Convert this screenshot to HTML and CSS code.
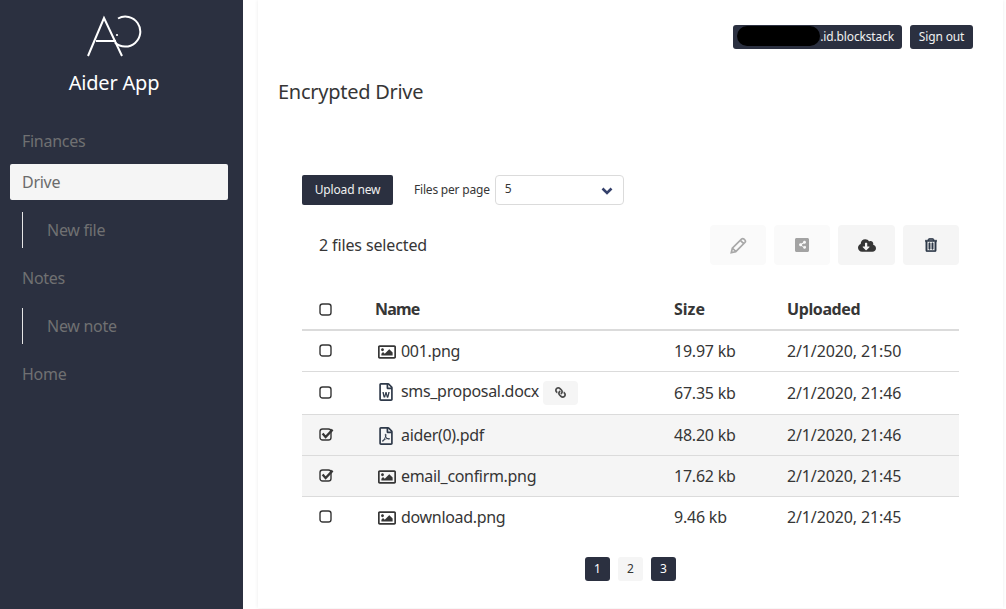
FILE: index.html
```html
<!DOCTYPE html>
<html lang="en">
<head>
<meta charset="utf-8">
<title>Aider App</title>
<link rel="stylesheet" href="styles.css">
</head>
<body>
<svg class="defs" aria-hidden="true">
  <symbol id="i-image" viewBox="0 0 512 512"><path d="M464 64H48C21.49 64 0 85.49 0 112v288c0 26.51 21.49 48 48 48h416c26.51 0 48-21.49 48-48V112c0-26.51-21.49-48-48-48zm-6 336H54a6 6 0 0 1-6-6V118a6 6 0 0 1 6-6h404a6 6 0 0 1 6 6v276a6 6 0 0 1-6 6zM128 152c-22.091 0-40 17.909-40 40s17.909 40 40 40 40-17.909 40-40-17.909-40-40-40zM96 352h320v-80l-87.515-87.515c-4.686-4.686-12.284-4.686-16.971 0L192 304l-39.515-39.515c-4.686-4.686-12.284-4.686-16.971 0L96 304v48z"/></symbol>
  <symbol id="i-word" viewBox="0 0 384 512"><path d="M369.9 97.9L286 14C277 5 264.8-.1 252.1-.1H48C21.5 0 0 21.5 0 48v416c0 26.5 21.5 48 48 48h288c26.5 0 48-21.5 48-48V131.9c0-12.7-5.1-25-14.1-34zM332.1 128H256V51.9l76.1 76.1zM48 464V48h160v104c0 13.3 10.7 24 24 24h104v288H48zm220.1-208c-5.7 0-10.6 4-11.7 9.5-20.6 97.7-20.4 95.4-21 103.5-.2-1.2-.4-2.6-.7-4.3-.8-5.1.3.2-23.6-99.5-1.3-5.4-6.1-9.2-11.7-9.2h-13.3c-5.5 0-10.3 3.8-11.7 9.1-24.4 99-24 96.2-24.8 103.7-.1-1.1-.2-2.5-.5-4.2-.7-5.2-14.1-73.3-19.1-99-1.1-5.6-6-9.7-11.8-9.7h-16.8c-7.8 0-13.5 7.3-11.7 14.8 8 32.6 26.7 109.5 33.2 136 1.3 5.4 6.1 9.1 11.7 9.1h25.2c5.5 0 10.3-3.7 11.6-9.1l17.9-71.4c1.5-6.2 2.5-12 3-17.3l.3 1.8c1.4 8.1-.5.2 19.8 87 1.3 5.4 6.1 9.2 11.7 9.2h24.7c5.5 0 10.3-3.7 11.6-9.1 20.8-81.9 30.2-119 34.5-136 1.9-7.6-3.8-14.9-11.6-14.9h-15.8z"/></symbol>
  <symbol id="i-pdf" viewBox="0 0 384 512"><path d="M369.9 97.9L286 14C277 5 264.8-.1 252.1-.1H48C21.5 0 0 21.5 0 48v416c0 26.5 21.5 48 48 48h288c26.5 0 48-21.5 48-48V131.9c0-12.7-5.1-25-14.1-34zM332.1 128H256V51.9l76.1 76.1zM48 464V48h160v104c0 13.3 10.7 24 24 24h104v288H48zm250.2-143.7c-12.2-12-47-8.7-64.4-6.5-17.2-10.5-28.7-25-36.8-46.3 3.9-16.1 10.1-40.6 5.4-56-4.2-26.2-37.8-23.6-42.6-5.9-4.4 16.1-.4 38.5 7 67.1-10 23.9-24.9 56-35.4 74.4-20 10.3-47 26.2-51 46.2-3.3 15.8 26 55.2 76.1-31.2 22.4-7.4 46.8-16.5 68.4-20.1 18.9 10.2 41 17 55.8 17 25.5 0 28-28.2 17.5-38.7zm-198.1 77.8c5.1-13.7 24.5-29.5 30.4-35-19 30.3-30.4 35.7-30.4 35zm81.6-190.6c7.4 0 6.7 32.1 1.8 40.8-4.4-13.9-4.3-40.8-1.8-40.8zm-24.4 136.6c9.7-16.9 18-37 24.7-54.7 8.3 15.1 18.9 27.2 30.1 35.5-20.8 4.3-38.9 13.1-54.8 19.2zm131.6-5s-5 6-37.3-7.8c35.1-2.6 40.9 5.4 37.3 7.8z"/></symbol>
  <symbol id="i-check" viewBox="0 0 16 15"><rect x="1" y="2" width="11" height="11" rx="2.6" fill="none" stroke="#363636" stroke-width="1.4"/><path d="M3.6 6.6 L6.6 10 L13.6 2.6" fill="none" stroke="#363636" stroke-width="2.3"/></symbol>
  <symbol id="i-square" viewBox="0 0 16 15"><rect x="1" y="2" width="11" height="11" rx="2.6" fill="none" stroke="#363636" stroke-width="1.4"/></symbol>
</svg>
<div class="app">
  <aside class="sidebar">
    <svg class="logo" viewBox="0 0 58 42" fill="none" stroke="#fff" stroke-width="2">
      <path d="M3 41 L19 3 L37 41"/>
      <path d="M11 26 H31"/>
      <path d="M33 3.5 A15 15 0 1 1 30 27.5"/>
      <circle cx="32" cy="20" r="1.1" fill="#fff" stroke="none"/>
    </svg>
    <h1 class="brand">Aider App</h1>
    <nav class="menu">
      <a class="menu-item">Finances</a>
      <a class="menu-item active">Drive</a>
      <div class="submenu"><a class="menu-item">New file</a></div>
      <a class="menu-item">Notes</a>
      <div class="submenu"><a class="menu-item">New note</a></div>
      <a class="menu-item">Home</a>
    </nav>
  </aside>
  <main class="card">
    <div class="topbar">
      <span class="btn btn-user"><span class="redact"></span>.id.blockstack</span>
      <span class="btn btn-signout">Sign out</span>
    </div>
    <h2 class="title">Encrypted Drive</h2>
    <section class="drive">
      <div class="controls">
        <span class="btn btn-upload">Upload new</span>
        <label class="per-page">Files per page</label>
        <div class="select">5
          <svg class="chevron" viewBox="0 0 12 8" fill="none" stroke="#34406b" stroke-width="2.6"><path d="M1.5 1.5 L6 6 L10.5 1.5"/></svg>
        </div>
      </div>
      <div class="selection">
        <span class="count">2 files selected</span>
        <div class="actions">
          <span class="action off">
            <svg class="ico" viewBox="0 0 16 16" fill="none" stroke="#a8a8a8" stroke-width="1.6"><path d="M1.2 14.8 L2.2 10.6 L10.8 2 Q12 .9 13.2 2 L14 2.8 Q15.1 4 14 5.2 L5.4 13.8 Z M2.4 10.6 L5.4 13.6 M9.8 3.2 L12.8 6.2"/></svg>
          </span>
          <span class="action off">
            <svg class="ico-share" viewBox="0 0 448 512" fill="#a3a3a3"><path fill-rule="evenodd" d="M400 32H48C21.49 32 0 53.49 0 80v352c0 26.51 21.49 48 48 48h352c26.51 0 48-21.49 48-48V80c0-26.51-21.49-48-48-48zM304 296c-11.3 0-21.7 3.9-29.9 10.4l-51.2-32a48.5 48.5 0 0 0 0-36.7l51.2-32c8.2 6.5 18.6 10.4 29.9 10.4 26.5 0 48-21.5 48-48s-21.5-48-48-48-48 21.5-48 48c0 3.6.4 7 1.1 10.4l-51.2 32C199.7 203.9 189.3 200 178 200c-26.5 0-48 21.5-48 48s21.5 48 48 48c11.3 0 21.7-3.9 29.9-10.4l51.2 32a48.6 48.6 0 0 0-1.1 10.4c0 26.5 21.5 48 48 48s48-21.5 48-48-21.5-48-48-48z"/></svg>
          </span>
          <span class="action wide">
            <svg class="ico-cloud" viewBox="0 0 640 512" fill="#363636"><path d="M537.6 226.6c4.1-10.7 6.4-22.4 6.4-34.6 0-53-43-96-96-96-19.7 0-38.1 6-53.3 16.2C367 64.2 315.3 32 256 32c-88.4 0-160 71.6-160 160 0 2.7.1 5.4.2 8.1C40.2 219.8 0 273.2 0 336c0 79.5 64.5 144 144 144h368c70.7 0 128-57.3 128-128 0-61.9-44-113.6-102.4-125.4zm-132.9 88.7L299.3 420.7c-6.2 6.2-16.4 6.2-22.6 0L171.3 315.3c-10.1-10.1-2.9-27.3 11.3-27.3H248V176c0-8.8 7.2-16 16-16h48c8.8 0 16 7.2 16 16v112h65.4c14.2 0 21.4 17.2 11.3 27.3z"/></svg>
          </span>
          <span class="action">
            <svg class="ico-trash" viewBox="0 0 448 512" fill="#2f3a4a" stroke="#2f3a4a" stroke-width="22"><path d="M268 416h24a12 12 0 0 0 12-12V188a12 12 0 0 0-12-12h-24a12 12 0 0 0-12 12v216a12 12 0 0 0 12 12zM432 80h-82.41l-34-56.7A48 48 0 0 0 274.41 0H173.59a48 48 0 0 0-41.16 23.3L98.41 80H16A16 16 0 0 0 0 96v16a16 16 0 0 0 16 16h16v336a48 48 0 0 0 48 48h288a48 48 0 0 0 48-48V128h16a16 16 0 0 0 16-16V96a16 16 0 0 0-16-16zM171.84 50.91A6 6 0 0 1 177 48h94a6 6 0 0 1 5.15 2.91L293.61 80H154.39zM368 464H80V128h288zm-212-48h24a12 12 0 0 0 12-12V188a12 12 0 0 0-12-12h-24a12 12 0 0 0-12 12v216a12 12 0 0 0 12 12z"/></svg>
          </span>
        </div>
      </div>
      <table class="files">
        <colgroup><col class="c-check"><col class="c-name"><col class="c-size"><col class="c-date"></colgroup>
        <thead>
          <tr><th><svg class="box"><use href="#i-square"/></svg></th><th class="th-name">Name</th><th class="th-size">Size</th><th>Uploaded</th></tr>
        </thead>
        <tbody>
          <tr><td><svg class="box"><use href="#i-square"/></svg></td><td class="fname"><svg class="ftype img"><use href="#i-image"/></svg>001.png</td><td class="fsize">19.97 kb</td><td>2/1/2020, 21:50</td></tr>
          <tr class="tall"><td><svg class="box"><use href="#i-square"/></svg></td><td class="fname"><svg class="ftype"><use href="#i-word"/></svg>sms_proposal.docx<span class="link-tag"><svg class="link-ico" viewBox="0 0 512 512" fill="#4a4a4a"><path transform="translate(512 0) scale(-1 1)" d="M326.612 185.391c59.747 59.809 58.927 155.698.36 214.59-.11.12-.24.25-.36.37l-67.2 67.2c-59.27 59.27-155.699 59.262-214.96 0-59.27-59.26-59.27-155.7 0-214.96l37.106-37.106c9.84-9.84 26.786-3.3 27.294 10.606.648 17.722 3.826 35.527 9.69 52.721 1.986 5.822.567 12.262-3.783 16.612l-13.087 13.087c-28.026 28.026-28.905 73.66-1.155 101.96 28.024 28.579 74.086 28.749 102.325.51l67.2-67.19c28.191-28.191 28.073-73.757 0-101.83-3.701-3.694-7.429-6.564-10.341-8.569a16.037 16.037 0 0 1-6.947-12.606c-.396-10.567 3.348-21.456 11.698-29.806l21.054-21.055c5.521-5.521 14.182-6.199 20.584-1.731a152.482 152.482 0 0 1 20.522 17.197zM467.547 44.449c-59.261-59.262-155.69-59.27-214.96 0l-67.2 67.2c-.12.12-.25.25-.36.37-58.566 58.892-59.387 154.781.36 214.59a152.454 152.454 0 0 0 20.521 17.196c6.402 4.468 15.064 3.789 20.584-1.731l21.054-21.055c8.35-8.35 12.094-19.239 11.698-29.806a16.037 16.037 0 0 0-6.947-12.606c-2.912-2.005-6.64-4.875-10.341-8.569-28.073-28.073-28.191-73.639 0-101.83l67.2-67.19c28.239-28.239 74.3-28.069 102.325.51 27.75 28.3 26.872 73.934-1.155 101.96l-13.087 13.087c-4.35 4.35-5.769 10.79-3.783 16.612 5.864 17.194 9.042 34.999 9.69 52.721.509 13.906 17.454 20.446 27.294 10.606l37.106-37.106c59.271-59.259 59.271-155.699.001-214.959z"/></svg></span></td><td class="fsize">67.35 kb</td><td>2/1/2020, 21:46</td></tr>
          <tr class="sel"><td><svg class="box"><use href="#i-check"/></svg></td><td class="fname"><svg class="ftype"><use href="#i-pdf"/></svg>aider(0).pdf</td><td class="fsize">48.20 kb</td><td>2/1/2020, 21:46</td></tr>
          <tr class="sel"><td><svg class="box"><use href="#i-check"/></svg></td><td class="fname"><svg class="ftype img"><use href="#i-image"/></svg>email_confirm.png</td><td class="fsize">17.62 kb</td><td>2/1/2020, 21:45</td></tr>
          <tr class="last"><td><svg class="box"><use href="#i-square"/></svg></td><td class="fname"><svg class="ftype img"><use href="#i-image"/></svg>download.png</td><td class="fsize">9.46 kb</td><td>2/1/2020, 21:45</td></tr>
        </tbody>
      </table>
      <div class="pager">
        <span class="page on">1</span>
        <span class="page">2</span>
        <span class="page on">3</span>
      </div>
    </section>
  </main>
</div>
</body>
</html>
```
FILE: styles.css
```css
* { box-sizing: border-box; }
html, body { margin: 0; height: 100%; overflow: hidden; }
body {
  background: #fff;
  color: #363636;
  font-family: "Noto Sans", "DejaVu Sans", sans-serif;
  font-size: 16px;
}
.defs { width: 0; height: 0; position: absolute; }
.app { display: flex; height: 609px; }

.sidebar {
  width: 243px;
  flex: none;
  background: #2b3040;
  display: flex;
  flex-direction: column;
  align-items: center;
  padding: 15px 15px 0 0;
}
.logo { width: 58px; height: 42px; display: block; }
.brand { margin: 12px 0 0; font-size: 20px; line-height: 28px; font-weight: 400; color: #fff; letter-spacing: -.2px; }
.menu { align-self: stretch; margin: 26px 0 0 10px; display: flex; flex-direction: column; }
.menu-item { display: block; height: 36px; line-height: 36px; padding-left: 12px; color: #707072; font-size: 16px; letter-spacing: -.28px; }
.menu-item.active { background: #f5f5f5; border-radius: 2px; color: #6b6b6b; margin-top: 5px; }
.submenu { margin: 12px 0 12px 12px; border-left: 1px solid #e6e6e6; }
.submenu .menu-item { padding-left: 24px; }

.card {
  margin-left: 15px;
  width: 745px;
  height: 608px;
  box-shadow: 0 0 4px rgba(10, 10, 10, .08);
  padding: 25px 30px 0 20px;
  flex: none;
}
.topbar { display: flex; justify-content: flex-end; gap: 8px; }
.btn {
  display: inline-flex;
  align-items: center;
  justify-content: center;
  background: #2b3040;
  color: #f0f0f0;
  border-radius: 3px;
  font-size: 12px;
  letter-spacing: -.15px;
  padding-bottom: 2px;
}
.btn-user { position: relative; width: 169px; height: 24px; justify-content: flex-end; padding-right: 8px; }
.btn-signout { width: 63px; height: 24px; }
.redact { position: absolute; left: 4px; top: 1px; width: 83px; height: 20px; background: #000; border-radius: 10px; }
.title { margin: 29px 0 0; font-size: 20px; line-height: 28px; font-weight: 400; color: #363636; letter-spacing: -.27px; }

.drive { margin: 69px 14px 0 24px; }
.controls { display: flex; align-items: center; height: 30px; }
.btn-upload { width: 91px; height: 30px; border-radius: 2px; }
.per-page { margin: 0 0 2px 21px; font-size: 12px; color: #363636; letter-spacing: -.2px; }
.select {
  position: relative;
  margin-left: 5px;
  width: 129px;
  height: 30px;
  border: 1px solid #dbdbdb;
  border-radius: 4px;
  font-size: 12px;
  line-height: 26px;
  padding-left: 9px;
}
.chevron { position: absolute; right: 10px; top: 11px; width: 12px; height: 8px; }

.selection { display: flex; justify-content: space-between; align-items: center; margin-top: 20px; height: 40px; padding-left: 17px; }
.count { font-size: 16px; letter-spacing: -.13px; }
.actions { display: flex; gap: 8px; }
.action { width: 56px; height: 40px; border-radius: 4px; background: #f5f5f5; display: flex; align-items: center; justify-content: center; }
.action.off { background: #fafafa; }
.action.wide { width: 57px; }
.ico { width: 17px; height: 17px; }
.ico-share { width: 14px; height: 16px; }
.ico-cloud { width: 18px; height: 15px; }
.ico-trash { width: 12px; height: 14px; }

.files { width: 657px; border-collapse: collapse; table-layout: fixed; margin-top: 24px; }
.c-check { width: 62px; }
.c-name { width: 298px; }
.c-size { width: 113px; }
.files th, .files td { padding: 0 0 0 12px; text-align: left; vertical-align: middle; font-size: 16px; color: #363636; letter-spacing: -.13px; }
.files th:first-child, .files td:first-child { padding-left: 17px; }
.files th { height: 41px; font-weight: 700; border-bottom: 2px solid #dbdbdb; letter-spacing: -.4px; }
.files th.th-name { padding-left: 11px; letter-spacing: -.8px; }
.files th.th-size { letter-spacing: 0; }
.files td { border-bottom: 1px solid #dbdbdb; height: 41px; }
.files tr.tall td { height: 43px; }
.files tr.last td { border-bottom: 0; }
.files tr.sel td { background: #f5f5f5; }
.files td.fname { letter-spacing: -.32px; }
.files td.fsize { letter-spacing: -.22px; }
.box { width: 16px; height: 15px; display: block; }
.ftype { width: 14px; height: 18px; fill: #2f3a4a; margin: 0 8px 0 3px; vertical-align: -4px; }
.ftype.img { width: 18px; margin: 0 5px 0 2px; fill: #363636; }
.link-tag { display: inline-flex; align-items: center; justify-content: center; width: 35px; height: 24px; margin-left: 4px; background: #f5f5f5; border-radius: 4px; vertical-align: middle; }
.link-ico { width: 11px; height: 11px; }

.pager { display: flex; justify-content: center; gap: 8px; margin-top: 20px; }
.page { width: 25px; height: 24px; padding-bottom: 2px; border-radius: 3px; background: #f5f5f5; color: #363636; font-size: 12px; display: flex; align-items: center; justify-content: center; }
.page.on { background: #2b3040; color: #fff; }
```
